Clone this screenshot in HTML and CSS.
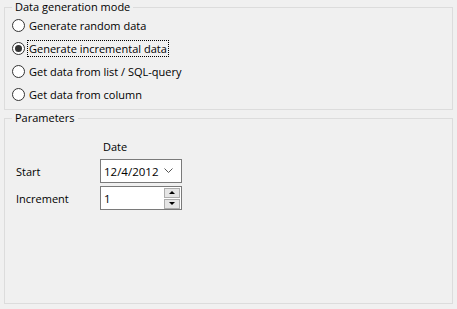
FILE: index.html
```html
<!DOCTYPE html>
<html lang="en">
<head>
    <meta charset="UTF-8">
    <title>Data generation</title>
    <link rel="stylesheet" href="styles.css">
</head>
<body>
    <fieldset class="grupo modo">
        <legend>Data generation mode</legend>
        <label class="opcion">
            <span class="radio"></span>
            <span class="texto">Generate random data</span>
        </label>
        <label class="opcion">
            <span class="radio marcado"></span>
            <span class="texto foco">Generate incremental data</span>
        </label>
        <label class="opcion">
            <span class="radio"></span>
            <span class="texto">Get data from list / SQL-query</span>
        </label>
        <label class="opcion">
            <span class="radio"></span>
            <span class="texto">Get data from column</span>
        </label>
    </fieldset>

    <fieldset class="grupo parametros">
        <legend>Parameters</legend>
        <div class="tabla">
            <div></div>
            <div class="columna">Date</div>

            <div class="etiqueta">Start</div>
            <div class="campo combo">
                <span class="valor">12/4/2012</span>
                <svg class="flecha" width="10" height="6" viewBox="0 0 10 6">
                    <polyline points="0.5,0.5 4.5,4.5 8.5,0.5" fill="none" stroke="#555" stroke-width="1"></polyline>
                </svg>
            </div>

            <div class="etiqueta">Increment</div>
            <div class="campo spin">
                <span class="valor">1</span>
                <div class="botones">
                    <div class="boton"><span class="tri arriba"></span></div>
                    <div class="boton"><span class="tri abajo"></span></div>
                </div>
            </div>
        </div>
    </fieldset>
</body>
</html>
```

FILE: styles.css
```css
body {
    margin: 0;
    background-color: #f0f0f0;
    font-family: "Open Sans", "Liberation Sans", sans-serif;
    font-size: 11px;
    color: #000;
}
.grupo {
    margin: 0 4px;
    padding: 0;
    border: 1px solid #dcdcdc;
}
.grupo legend {
    margin-left: 7px;
    padding: 0 3px;
    line-height: 14px;
}
.modo {
    padding-bottom: 3px;
}
.opcion {
    display: flex;
    align-items: center;
    height: 23px;
    padding-left: 7px;
}
.radio {
    width: 11px;
    height: 11px;
    border: 1px solid #333;
    border-radius: 50%;
    background-color: #fff;
    display: flex;
    align-items: center;
    justify-content: center;
}
.radio.marcado::after {
    content: "";
    width: 7px;
    height: 7px;
    border-radius: 50%;
    background-color: #333;
}
.texto {
    margin-left: 2px;
    padding: 0 1px;
    line-height: 15px;
    border: 1px dotted transparent;
}
.texto.foco {
    border-color: #000;
}
.parametros {
    margin-top: 1px;
    height: 191px;
}
.tabla {
    display: grid;
    grid-template-columns: 84px 82px;
    row-gap: 3px;
    padding-left: 11px;
    align-items: center;
}
.columna {
    padding: 14px 0 2px 3px;
    line-height: 15px;
}
.campo {
    height: 22px;
    border: 1px solid #7a7a7a;
    background-color: #fff;
    display: flex;
    align-items: center;
    justify-content: space-between;
    font-size: 11.5px;
}
.valor {
    padding-left: 3px;
}
.flecha {
    margin-right: 7px;
}
.botones {
    display: flex;
    flex-direction: column;
    gap: 1px;
    margin-right: 1px;
}
.boton {
    width: 14px;
    height: 8px;
    border: 1px solid #adadad;
    background-color: #e5e5e5;
    display: flex;
    align-items: center;
    justify-content: center;
}
.tri {
    width: 0;
    height: 0;
    border-left: 3px solid transparent;
    border-right: 3px solid transparent;
}
.tri.arriba {
    border-bottom: 3px solid #000;
}
.tri.abajo {
    border-top: 3px solid #000;
}
```
